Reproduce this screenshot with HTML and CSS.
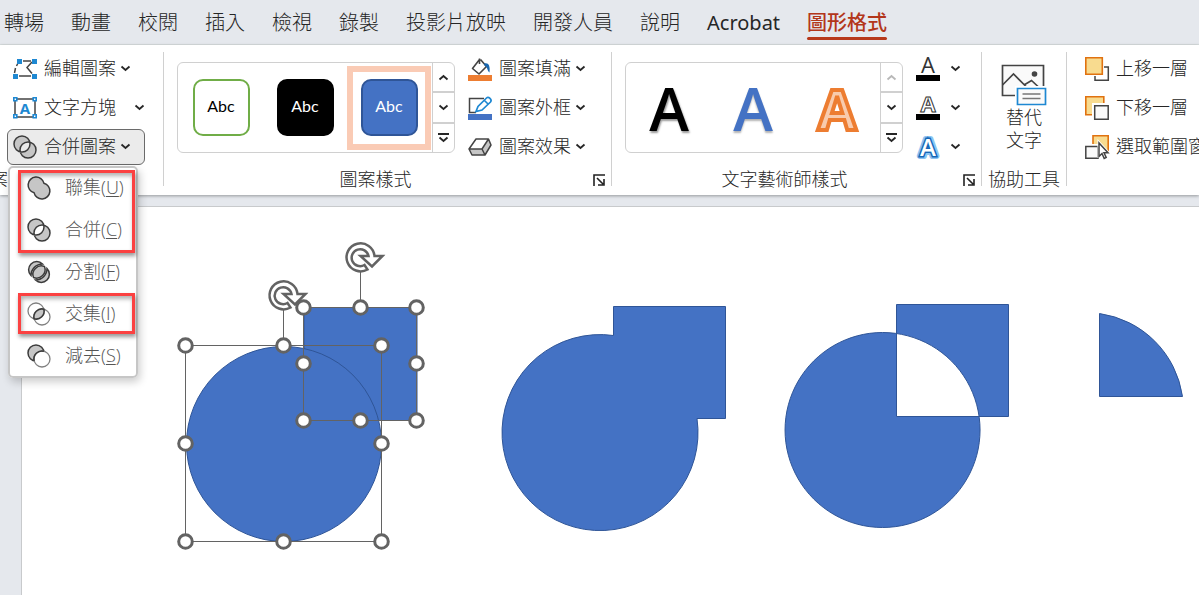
FILE: index.html
```html
<!DOCTYPE html>
<html lang="zh-Hant">
<head>
  <meta charset="UTF-8">
  <meta name="viewport" content="width=device-width, initial-scale=1.0">
  <title>圖形格式</title>
  <link rel="stylesheet" href="styles.css">
</head>
<body>
  <!-- shared symbols -->
  <svg class="symbols" aria-hidden="true">
    <symbol id="chevron" viewBox="0 0 11 7"><path d="M1.5 1.5 5.5 5 9.5 1.5" fill="none" stroke="currentColor" stroke-width="1.8"/></symbol>
    <symbol id="chevron-up" viewBox="0 0 11 7"><path d="M1.5 5.5 5.5 2 9.5 5.5" fill="none" stroke="currentColor" stroke-width="1.8"/></symbol>
    <symbol id="more" viewBox="0 0 11 10"><path d="M0 1h11M1.5 4.5 5.5 8 9.5 4.5" fill="none" stroke="currentColor" stroke-width="1.8"/></symbol>
    <symbol id="launcher" viewBox="0 0 12 12"><path d="M1 12V1h11M4 4l6 6M5 11h6V5" fill="none" stroke="#222" stroke-width="1.6"/></symbol>
    <symbol id="combine" viewBox="0 0 24 24">
      <path fill-rule="evenodd" d="M9 1a8 8 0 1 0 0 16a8 8 0 1 0 0-16M15 7a8 8 0 1 0 0 16a8 8 0 1 0 0-16" fill="#c6c6c6" stroke="#3b3b3b" stroke-width="1.5"/>
    </symbol>
    <symbol id="handle" viewBox="-9 -9 18 18"><circle r="6.8" fill="#fff" stroke="#636363" stroke-width="3"/></symbol>
    <symbol id="rotate" viewBox="-17 -17 42 34">
      <path d="M7 12A14 14 0 1 1 14-1.5H22L11.5 9 0-1.5H8A8.5 8.5 0 1 0 4 7.5Z" fill="#fff" stroke="#636363" stroke-width="2.5"/>
    </symbol>
  </svg>

  <nav class="tabs">
    <a href="#">轉場</a>
    <a href="#">動畫</a>
    <a href="#">校閱</a>
    <a href="#">插入</a>
    <a href="#">檢視</a>
    <a href="#">錄製</a>
    <a href="#">投影片放映</a>
    <a href="#">開發人員</a>
    <a href="#">說明</a>
    <a href="#" class="latin">Acrobat</a>
    <a href="#" class="active">圖形格式</a>
  </nav>

  <div class="ribbon">
    <!-- insert shapes -->
    <section class="group group-insert">
      <div class="group-body">
        <div class="stack">
          <button class="cmd">
            <svg class="icon" viewBox="0 0 24 24">
              <path d="M5 6 3.5 9M2.500 11 1.500 16M10 4h8M19 5l-5 5.500 5 6M6 19h12" fill="none" stroke="#444" stroke-width="1.5"/>
              <path d="M4 2h5v5H4zM19 2h5v5h-5zM0 17h5v5H0zM19 17h5v5h-5z" fill="#1e88d2"/>
            </svg>
            <span>編輯圖案</span>
            <svg class="chev"><use href="#chevron"/></svg>
          </button>
          <div class="split">
            <button class="cmd">
              <svg class="icon" viewBox="0 0 24 24">
                <path d="M2 3h20v18H2z" fill="none" stroke="#444" stroke-width="1.5"/>
                <path d="M.8 1.8h3v3h-3zM20.2 1.8h3v3h-3zM.8 18.8h3v3h-3zM20.2 18.8h3v3h-3z" fill="#fff" stroke="#1e88d2" stroke-width="1.6"/>
                <text x="12" y="17.5" class="icon-letter">A</text>
              </svg>
              <span>文字方塊</span>
            </button>
            <button class="drop" aria-label="文字方塊"><svg class="chev"><use href="#chevron"/></svg></button>
          </div>
          <div class="menu-anchor">
            <button class="cmd open">
              <svg class="icon"><use href="#combine"/></svg>
              <span>合併圖案</span>
              <svg class="chev"><use href="#chevron"/></svg>
            </button>
            <div class="menu">
              <button>
                <svg class="icon" viewBox="0 0 24 24"><path d="M16.9 7.2A8 8 0 1 0 7.1 16.8A8 8 0 1 0 16.9 7.2Z" fill="#c6c6c6" stroke="#3b3b3b" stroke-width="1.5"/></svg>
                <span>聯集(<u>U</u>)</span>
              </button>
              <button>
                <svg class="icon"><use href="#combine"/></svg>
                <span>合併(<u>C</u>)</span>
              </button>
              <button>
                <svg class="icon" viewBox="0 0 24 24">
                  <path d="M15.5 4A8 8 0 1 0 4 15.5A11.500 11.500 0 0 1 15.5 4Z" fill="#c6c6c6" stroke="#3b3b3b" stroke-width="1.5"/>
                  <path d="M8.500 20A8 8 0 1 0 20 8.500A11.500 11.500 0 0 1 8.500 20Z" fill="#c6c6c6" stroke="#3b3b3b" stroke-width="1.5"/>
                  <path d="M17.500 6.500A8.500 8.500 0 0 1 6.500 17.500A8.500 8.500 0 0 1 17.500 6.500Z" fill="#c6c6c6" stroke="#3b3b3b" stroke-width="1.5"/>
                </svg>
                <span>分割(<u>F</u>)</span>
              </button>
              <button>
                <svg class="icon" viewBox="0 0 24 24">
                  <circle cx="9" cy="9" r="8" fill="none" stroke="#808080" stroke-width="1.3"/>
                  <circle cx="15" cy="15" r="8" fill="none" stroke="#808080" stroke-width="1.3"/>
                  <path d="M16.9 7.2A8 8 0 0 1 7.1 16.8A8 8 0 0 1 16.9 7.2Z" fill="#c6c6c6" stroke="#3b3b3b" stroke-width="1.6"/>
                </svg>
                <span>交集(<u>I</u>)</span>
              </button>
              <button>
                <svg class="icon" viewBox="0 0 24 24">
                  <circle cx="9" cy="9" r="8" fill="#c6c6c6" stroke="#3b3b3b" stroke-width="1.5"/>
                  <circle cx="15" cy="15" r="8" fill="#fff" stroke="#808080" stroke-width="1.3"/>
                  <path d="M16.9 7.2A8 8 0 0 0 7.1 16.8" fill="none" stroke="#3b3b3b" stroke-width="1.5"/>
                </svg>
                <span>減去(<u>S</u>)</span>
              </button>
              <div class="mark mark-first"></div>
              <div class="mark mark-second"></div>
            </div>
          </div>
        </div>
      </div>
      <div class="group-foot"><span>案</span></div>
    </section>
    <div class="divider"></div>

    <!-- shape styles -->
    <section class="group">
      <div class="group-body">
        <div class="gallery">
          <button class="cell"><span class="tile tile-outline">Abc</span></button>
          <button class="cell"><span class="tile tile-black">Abc</span></button>
          <button class="cell selected"><span class="tile tile-blue">Abc</span></button>
          <div class="scroller">
            <button aria-label="上一列"><svg class="chev"><use href="#chevron-up"/></svg></button>
            <button aria-label="下一列"><svg class="chev"><use href="#chevron"/></svg></button>
            <button aria-label="其他"><svg class="more"><use href="#more"/></svg></button>
          </div>
        </div>
        <div class="stack">
          <button class="cmd">
            <svg class="icon" viewBox="0 0 24 24">
              <path d="M11.5 1.5V7M11.5 2.5 4.5 11.5 11 17 18.5 9.5 12.5 2.5" fill="#fff" stroke="#444" stroke-width="1.6" stroke-linejoin="round"/>
              <path d="M16 6.5C20 5 22.5 8 21.5 15.5C19 14 20 10 16.5 8.5Z" fill="#1767b0"/>
              <path d="M0 18h24v6H0z" fill="#ed7d31"/>
            </svg>
            <span>圖案填滿</span>
            <svg class="chev"><use href="#chevron"/></svg>
          </button>
          <button class="cmd">
            <svg class="icon" viewBox="0 0 24 24">
              <path d="M16 2.5H1.5v14H8" fill="none" stroke="#444" stroke-width="1.5"/>
              <path d="M8 15.5 10 10.5 18.5 2C20.5 0 24.5 3.5 22.5 6L14 14ZM16.5 4.5 20.5 8.5" fill="#fff" stroke="#1e88d2" stroke-width="1.7"/>
              <path d="M0 18h24v6H0z" fill="#4472c4"/>
            </svg>
            <span>圖案外框</span>
            <svg class="chev"><use href="#chevron"/></svg>
          </button>
          <button class="cmd">
            <svg class="icon" viewBox="0 0 24 24">
              <path d="M8 4h12.5L23 10 17 20H4L1 14Z" fill="#c6c6c6"/>
              <path d="M8 4h12.5L14 14H1Z" fill="#fff"/>
              <path d="M8 4h12.5L23 10 17 20H4L1 14ZM1 14H14L20.5 4M14 14 17 20" fill="none" stroke="#444" stroke-width="1.5" stroke-linejoin="round"/>
            </svg>
            <span>圖案效果</span>
            <svg class="chev"><use href="#chevron"/></svg>
          </button>
        </div>
      </div>
      <div class="group-foot">
        <span>圖案樣式</span>
        <button class="launcher" aria-label="圖案樣式"><svg><use href="#launcher"/></svg></button>
      </div>
    </section>
    <div class="divider"></div>

    <!-- WordArt styles -->
    <section class="group group-art">
      <div class="group-body">
        <div class="gallery">
          <button class="cell art art-black">A</button>
          <button class="cell art art-blue">A</button>
          <button class="cell art art-orange">A</button>
          <div class="scroller">
            <button aria-label="上一列" disabled><svg class="chev"><use href="#chevron-up"/></svg></button>
            <button aria-label="下一列"><svg class="chev"><use href="#chevron"/></svg></button>
            <button aria-label="其他"><svg class="more"><use href="#more"/></svg></button>
          </div>
        </div>
        <div class="stack">
          <button class="cmd text-cmd">
            <svg class="icon" viewBox="0 0 24 24"><text x="12" y="16" class="letter-fill">A</text><path d="M0 18h24v6H0z"/></svg>
            <svg class="chev"><use href="#chevron"/></svg>
          </button>
          <button class="cmd text-cmd">
            <svg class="icon" viewBox="0 0 24 24"><text x="12" y="16" class="letter-outline">A</text><path d="M0 18h24v6H0z"/></svg>
            <svg class="chev"><use href="#chevron"/></svg>
          </button>
          <button class="cmd text-cmd">
            <svg class="icon" viewBox="0 0 24 24">
              <text x="12" y="21" class="letter-glow">A</text>
              <text x="12" y="21" class="letter-blue">A</text>
            </svg>
            <svg class="chev"><use href="#chevron"/></svg>
          </button>
        </div>
      </div>
      <div class="group-foot">
        <span>文字藝術師樣式</span>
        <button class="launcher" aria-label="文字藝術師樣式"><svg><use href="#launcher"/></svg></button>
      </div>
    </section>
    <div class="divider"></div>

    <!-- accessibility -->
    <section class="group group-access">
      <div class="group-body">
        <button class="big-cmd">
          <svg viewBox="0 0 46 42">
            <path d="M1.5 1.5h41v30h-41z" fill="#fafafa" stroke="#444" stroke-width="1.7"/>
            <path d="M1.5 21 12.5 10 27 24.5M23 21 30.5 16.5 37 22.5" fill="none" stroke="#444" stroke-width="1.7"/>
            <circle cx="33.5" cy="10" r="2.8" fill="#444"/>
            <path d="M14 22h31v20H14z" fill="#fff"/>
            <path d="M16.5 24.5h28v16h-28z" fill="#fafafa" stroke="#1e88d2" stroke-width="1.7"/>
            <path d="M21.5 30h18M21.5 34.5h18" stroke="#777" stroke-width="1.5"/>
          </svg>
          <span>替代<br>文字</span>
        </button>
      </div>
      <div class="group-foot"><span>協助工具</span></div>
    </section>
    <div class="divider"></div>

    <!-- arrange -->
    <section class="group group-arrange">
      <div class="group-body">
        <div class="stack">
          <button class="cmd">
            <svg class="icon" viewBox="0 0 24 24">
              <path d="M19 10h4.3v13.3H10V19" fill="none" stroke="#444" stroke-width="1.5"/>
              <path d="M.8.8h16.5v16.5H.8z" fill="#f8db8f" stroke="#e07210" stroke-width="1.6"/>
            </svg>
            <span>上移一層</span>
          </button>
          <button class="cmd">
            <svg class="icon" viewBox="0 0 24 24">
              <path d="M.8.8h18v18H.8z" fill="#f8db8f" stroke="#e07210" stroke-width="1.6"/>
              <path d="M7 7h17v17H7z" fill="#fff"/>
              <path d="M9.7 9.7h13.5v13.5H9.7z" fill="#fafafa" stroke="#444" stroke-width="1.5"/>
            </svg>
            <span>下移一層</span>
          </button>
          <button class="cmd">
            <svg class="icon" viewBox="0 0 24 24">
              <path d="M8 .8h15.2V18H8z" fill="#f8db8f" stroke="#e07210" stroke-width="1.6"/>
              <path d="M0 9h15v15H0z" fill="#fff"/>
              <path d="M.8 11.5H13v11.7H.8z" fill="#fafafa" stroke="#444" stroke-width="1.5"/>
              <path d="M12.5 4v19h12V17Z" fill="#fff"/>
              <path d="M14 8v13.5l3-3 2.2 5 2-1-2.2-4.8H23Z" fill="#fff" stroke="#444" stroke-width="1.5"/>
            </svg>
            <span>選取範圍窗</span>
          </button>
        </div>
      </div>
    </section>
  </div>

  <main class="workspace">
    <div class="slide">
      <svg class="shapes" viewBox="22 207 1177 388">
        <!-- original pair, selected -->
        <g class="shape">
          <path d="M304 307.5h113v113H304z"/>
          <circle cx="284" cy="444" r="97.5"/>
        </g>
        <g class="frame">
          <path d="M185.5 345.5h196v196h-196zM283.5 345V305"/>
          <path d="M303.5 307.5h113v113h-113zM360.5 307V272"/>
        </g>
        <use href="#rotate" x="266.5" y="278.5" width="42" height="34"/>
        <use href="#rotate" x="343.5" y="240.5" width="42" height="34"/>
        <g class="handles">
          <use href="#handle" x="176.5" y="336.5" width="18" height="18"/>
          <use href="#handle" x="274.5" y="336.5" width="18" height="18"/>
          <use href="#handle" x="372.5" y="336.5" width="18" height="18"/>
          <use href="#handle" x="176.5" y="434.5" width="18" height="18"/>
          <use href="#handle" x="372.5" y="434.5" width="18" height="18"/>
          <use href="#handle" x="176.5" y="532.5" width="18" height="18"/>
          <use href="#handle" x="274.5" y="532.5" width="18" height="18"/>
          <use href="#handle" x="372.5" y="532.5" width="18" height="18"/>
          <use href="#handle" x="294.5" y="298.5" width="18" height="18"/>
          <use href="#handle" x="351.5" y="298.5" width="18" height="18"/>
          <use href="#handle" x="407.5" y="298.5" width="18" height="18"/>
          <use href="#handle" x="294.5" y="354.5" width="18" height="18"/>
          <use href="#handle" x="407.5" y="354.5" width="18" height="18"/>
          <use href="#handle" x="294.5" y="411.5" width="18" height="18"/>
          <use href="#handle" x="351.5" y="411.5" width="18" height="18"/>
          <use href="#handle" x="407.5" y="411.5" width="18" height="18"/>
        </g>
        <!-- union, combine, intersect -->
        <g class="shape">
          <path d="M613.5 306.5h112v112H697A98 98 0 1 1 613.5 335.5Z"/>
          <path fill-rule="evenodd" d="M882.5 332.5a97.5 97.5 0 1 0 .1 0ZM896.5 304.5h112v112h-112Z"/>
          <path d="M1099.5 313.5A98 98 0 0 1 1182.5 396.5H1099.5Z"/>
        </g>
      </svg>
    </div>
  </main>
</body>
</html>
```
FILE: styles.css
```css
* {
  margin: 0;
  padding: 0;
  box-sizing: border-box;
}

body {
  display: flex;
  flex-direction: column;
  height: 100vh;
  overflow: hidden;
  background: #e5e8ed;
  color: #262626;
  font-family: "Open Sans", "Noto Sans CJK TC", sans-serif;
  font-size: 18px;
  font-weight: 300;
}

button {
  border: 0;
  background: none;
  color: inherit;
  font: inherit;
  white-space: nowrap;
}

svg {
  display: block;
  flex: none;
}

.symbols {
  position: absolute;
  width: 0;
  height: 0;
}

/* Tabs */
.tabs {
  display: flex;
  gap: 27px;
  flex: none;
  height: 45px;
  padding: 0 4px;
  border-bottom: 1px solid #d9dfe0;
  font-size: 20px;
}

.tabs a {
  height: 40px;
  color: #262626;
  line-height: 46px;
  text-decoration: none;
  white-space: nowrap;
}

.tabs .latin {
  font-family: "Noto Sans", sans-serif;
  font-weight: 400;
}

.tabs .active {
  position: relative;
  color: #b3361a;
  font-weight: 500;
}

.tabs .active::after {
  content: "";
  position: absolute;
  right: 0;
  bottom: 0;
  left: 0;
  height: 3px;
  border-radius: 2px;
  background: #b7391b;
}

/* Ribbon */
.ribbon {
  position: relative;
  z-index: 1;
  display: flex;
  flex: none;
  height: 150px;
  background: #fff;
  box-shadow: 0 1px 3px rgba(0, 0, 0, 0.35);
}

.divider {
  flex: none;
  width: 1px;
  margin: 7px 0 9px;
  background: #d0d0d0;
}

.group {
  display: flex;
  flex: none;
  flex-direction: column;
  padding-top: 4px;
}

.group-body {
  display: flex;
  align-items: center;
  gap: 8px;
  height: 117px;
  padding: 0 20px 0 13px;
}

.group-insert .group-body {
  padding: 0 10px 0 7px;
}

.group-art .group-body {
  padding-right: 15px;
}

.group-access .group-body {
  justify-content: center;
  padding: 0 6px;
}

.group-foot {
  display: flex;
  align-items: center;
  height: 28px;
}

.group-foot span {
  flex: 1;
  text-align: center;
  line-height: 26px;
  margin-bottom: 2px;
  white-space: nowrap;
}

.group-insert .group-foot span {
  margin-left: -10px;
  text-align: left;
}

.group-access .group-foot {
  padding: 0 6px;
}

.launcher {
  display: flex;
  align-items: center;
  justify-content: center;
  width: 24px;
  height: 28px;
}

.launcher svg {
  width: 12px;
  height: 12px;
}

/* Commands */
.stack {
  display: flex;
  flex-direction: column;
  align-items: flex-start;
  gap: 3px;
}

.cmd {
  display: flex;
  align-items: center;
  height: 36px;
  padding: 0 5px;
  line-height: 32px;
}

.cmd span {
  margin: 0 4px 2px 7px;
}

.icon {
  width: 24px;
  height: 24px;
  overflow: visible;
}

.chev {
  width: 11px;
  height: 7px;
}

.split {
  display: flex;
}

.drop {
  padding: 0 8px;
}

.group-insert .cmd {
  padding: 0 6px;
}

.menu-anchor {
  position: relative;
}

.group-insert .open {
  padding: 0 13px 0 5px;
  border: 1px solid #6a6a6a;
  border-radius: 6px;
  background: #ebebeb;
}

.text-cmd {
  gap: 10px;
}

.icon-letter {
  fill: #1e88d2;
  font-size: 15px;
  font-weight: 700;
  text-anchor: middle;
}

.letter-fill,
.letter-outline,
.letter-glow,
.letter-blue {
  font-size: 22px;
  text-anchor: middle;
}

.letter-fill {
  fill: #333;
  font-weight: 400;
}

.letter-outline {
  fill: #fff;
  stroke: #333;
  stroke-width: 1px;
  font-weight: 700;
}

.letter-glow {
  fill: #8cc4f2;
  stroke: #8cc4f2;
  stroke-width: 6px;
  stroke-linejoin: round;
  font-size: 24px;
  font-weight: 700;
}

.letter-blue {
  fill: #fff;
  stroke: #1467b8;
  stroke-width: 3px;
  paint-order: stroke;
  font-size: 24px;
  font-weight: 600;
}

/* Merge shapes menu */
.menu {
  position: absolute;
  top: calc(100% + 1px);
  left: 1px;
  width: 130px;
  padding: 1px 0;
  border-radius: 5px;
  outline: 2px solid #c6c6c6;
  outline-offset: -2px;
  background: #fff;
  box-shadow: 2px 4px 8px rgba(0, 0, 0, 0.2);
}

.menu button {
  display: flex;
  align-items: center;
  gap: 14px;
  width: 100%;
  height: 42px;
  padding-left: 19px;
  color: #555;
}

.menu span {
  margin-bottom: 4px;
}

.menu u {
  text-underline-offset: 2px;
  text-decoration-thickness: 1px;
}

.mark {
  position: absolute;
  right: 3px;
  left: 10px;
  border: 3px solid #fb4141;
  box-shadow: 1px 3px 4px rgba(0, 0, 0, 0.4), inset 1px 3px 4px rgba(0, 0, 0, 0.3);
  pointer-events: none;
}

.mark-first {
  top: 4px;
  height: 83px;
}

.mark-second {
  top: 127px;
  height: 41px;
}

/* Galleries */
.gallery {
  display: flex;
  align-items: center;
  width: 278px;
  height: 91px;
  padding-left: 1px;
  border: 1px solid #d0d0d0;
  border-radius: 6px;
}

.cell {
  display: flex;
  flex: none;
  align-items: center;
  justify-content: center;
  width: 84px;
  height: 84px;
}

.selected {
  border: 6px solid #facbb5;
}

.tile {
  width: 57px;
  height: 57px;
  border: 2px solid #70ad47;
  border-radius: 10px;
  font-family: Lato, sans-serif;
  font-size: 16px;
  font-weight: 400;
  line-height: 49px;
  color: #000;
}

.tile-black {
  border-color: #000;
  background: #000;
  color: #fff;
}

.tile-blue {
  border-color: #2f5597;
  background: #4472c4;
  color: #fff;
}

.scroller {
  display: flex;
  flex: 1;
  flex-direction: column;
  align-self: stretch;
  margin-left: 1px;
  border-left: 1px solid #d0d0d0;
}

.scroller button {
  display: flex;
  flex: 1;
  align-items: center;
  justify-content: center;
}

.scroller button + button {
  border-top: 2px solid #d0d0d0;
}

.scroller button:disabled {
  color: #b8b8b8;
}

.more {
  width: 11px;
  height: 10px;
}

.art {
  font-size: 60px;
  font-weight: 600;
  line-height: 80px;
}

.art-black {
  color: #000;
  text-shadow: 1px 2px 2px rgba(0, 0, 0, 0.4);
}

.art-blue {
  color: #4472c4;
  text-shadow: 0 2px 2px rgba(0, 0, 0, 0.3);
}

.art-orange {
  color: #f8cbad;
  font-size: 56px;
  font-weight: 700;
  -webkit-text-stroke: 4px #ed7d31;
}

/* Alt text */
.big-cmd {
  display: flex;
  flex-direction: column;
  align-items: center;
  line-height: 23px;
}

.big-cmd svg {
  width: 46px;
  height: 42px;
}

/* Slide area */
.workspace {
  display: flex;
  flex: 1;
  min-height: 0;
  padding: 11px 0 0 21px;
}

.slide {
  flex: 1;
  overflow: hidden;
  border-top: 1px solid #c8cacc;
  border-left: 1px solid #c8cacc;
  background: #fff;
}

.shapes {
  width: 1177px;
  height: 388px;
}

.shape {
  fill: #4472c4;
  stroke: #2f5597;
  stroke-width: 1px;
}

.frame {
  fill: none;
  stroke: #636363;
  stroke-width: 1px;
}
```
